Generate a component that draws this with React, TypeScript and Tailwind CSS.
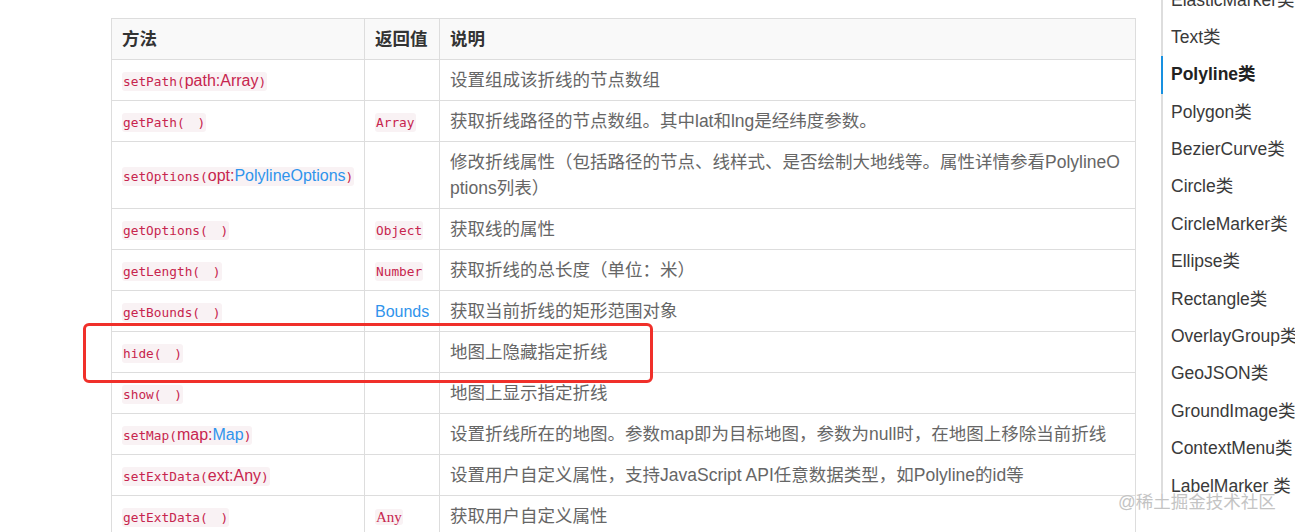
import type { ReactNode } from "react";

const SANS = "font-['Liberation_Sans','Noto_Sans_CJK_SC',sans-serif]";

function Code({ children }: { children: ReactNode }) {
    return (
        <code className="font-['DejaVu_Sans_Mono','Noto_Sans_CJK_SC',monospace] text-[12.8px] leading-none text-[#c7254e] bg-[#f9f2f4] px-[1px] py-[2px] rounded-[3px]">
            {children}
        </code>
    );
}

function Param({ children }: { children: ReactNode }) {
    return <span className={`${SANS} text-[16px] leading-none text-[#c7254e]`}>{children}</span>;
}

function Link({ children }: { children: ReactNode }) {
    return <span className={`${SANS} text-[16px] leading-none text-[#3094ec]`}>{children}</span>;
}

type Row = { method: ReactNode; ret?: ReactNode; desc: ReactNode };

const SP = "\u3000";

const rows: Row[] = [
    {
        method: (
            <Code>
                setPath(<Param>path:Array</Param>)
            </Code>
        ),
        desc: "设置组成该折线的节点数组",
    },
    { method: <Code>getPath({SP})</Code>, ret: <Code>Array</Code>, desc: "获取折线路径的节点数组。其中lat和lng是经纬度参数。" },
    {
        method: (
            <Code>
                setOptions(<Param>opt:</Param>
                <Link>PolylineOptions</Link>)
            </Code>
        ),
        desc: (
            <>
                修改折线属性（包括路径的节点、线样式、是否绘制大地线等。属性详情参看PolylineO
                <br />
                ptions列表）
            </>
        ),
    },
    { method: <Code>getOptions({SP})</Code>, ret: <Code>Object</Code>, desc: "获取线的属性" },
    { method: <Code>getLength({SP})</Code>, ret: <Code>Number</Code>, desc: "获取折线的总长度（单位：米）" },
    { method: <Code>getBounds({SP})</Code>, ret: <Link>Bounds</Link>, desc: "获取当前折线的矩形范围对象" },
    { method: <Code>hide({SP})</Code>, desc: "地图上隐藏指定折线" },
    { method: <Code>show({SP})</Code>, desc: "地图上显示指定折线" },
    {
        method: (
            <Code>
                setMap(<Param>map:</Param>
                <Link>Map</Link>)
            </Code>
        ),
        desc: "设置折线所在的地图。参数map即为目标地图，参数为null时，在地图上移除当前折线",
    },
    {
        method: (
            <Code>
                setExtData(<Param>ext:Any</Param>)
            </Code>
        ),
        desc: "设置用户自定义属性，支持JavaScript API任意数据类型，如Polyline的id等",
    },
    {
        method: <Code>getExtData({SP})</Code>,
        ret: (
            <code className="font-['Liberation_Serif',serif] text-[15px] leading-none text-[#c7254e] bg-[#f9f2f4] px-[1px] rounded-[3px]">
                Any
            </code>
        ),
        desc: "获取用户自定义属性",
    },
];

const navItems = [
    "ElasticMarker类",
    "Text类",
    "Polyline类",
    "Polygon类",
    "BezierCurve类",
    "Circle类",
    "CircleMarker类",
    "Ellipse类",
    "Rectangle类",
    "OverlayGroup类",
    "GeoJSON类",
    "GroundImage类",
    "ContextMenu类",
    "LabelMarker 类",
];

export default function App() {
    return (
        <div className={`relative w-[1295px] h-[532px] overflow-hidden bg-white ${SANS}`}>
            <div className="flex">
                {/* Table */}
                <div className="w-[1161px] shrink-0 pl-[111px] pt-[18px]">
                    <table className="w-[1025px] table-fixed border-collapse text-[17.5px] leading-[26px]">
                        <colgroup>
                            <col className="w-[253px]" />
                            <col className="w-[75px]" />
                            <col />
                        </colgroup>
                        <thead>
                            <tr className="bg-[#f9f9f9]">
                                <th className="border border-[#dddddd] px-[10px] py-[7px] text-left font-bold text-[#333]">方法</th>
                                <th className="border border-[#dddddd] px-[10px] py-[7px] text-left font-bold text-[#333]">返回值</th>
                                <th className="border border-[#dddddd] px-[10px] py-[7px] text-left font-bold text-[#333]">说明</th>
                            </tr>
                        </thead>
                        <tbody>
                            {rows.map((r, i) => (
                                <tr key={i}>
                                    <td className="border border-[#dddddd] pl-[10px] pr-[6px] py-[7px] whitespace-nowrap">{r.method}</td>
                                    <td className="border border-[#dddddd] px-[10px] py-[7px] whitespace-nowrap">{r.ret}</td>
                                    <td className="border border-[#dddddd] px-[10px] py-[7px] text-[#666] whitespace-nowrap">{r.desc}</td>
                                </tr>
                            ))}
                        </tbody>
                    </table>
                </div>

                {/* Side nav */}
                <ul className="-mt-[18.5px] h-[511.5px] border-l-2 border-[#dddddd] text-[17.5px] text-[#3a3a3a]">
                    {navItems.map((n) => (
                        <li
                            key={n}
                            className={
                                n === "Polyline类"
                                    ? "-ml-[2px] border-l-2 border-[#1890e0] pl-[8px] h-[37.4px] leading-[37.4px] font-bold text-[#222] whitespace-nowrap"
                                    : "pl-[8px] h-[37.4px] leading-[37.4px] whitespace-nowrap"
                            }
                        >
                            {n}
                        </li>
                    ))}
                </ul>
            </div>

            {/* highlight box */}
            <div className="absolute left-[83px] top-[323px] w-[570px] h-[60px] border-[3px] border-[#f0302a] rounded-[6px]" />

            {/* watermark */}
            <div className="absolute left-[1118px] top-[489px] text-[17.5px] leading-[26px] text-[#c4c4c4] whitespace-nowrap [text-shadow:0_0_2px_#fff]">
                @稀土掘金技术社区
            </div>
        </div>
    );
}
